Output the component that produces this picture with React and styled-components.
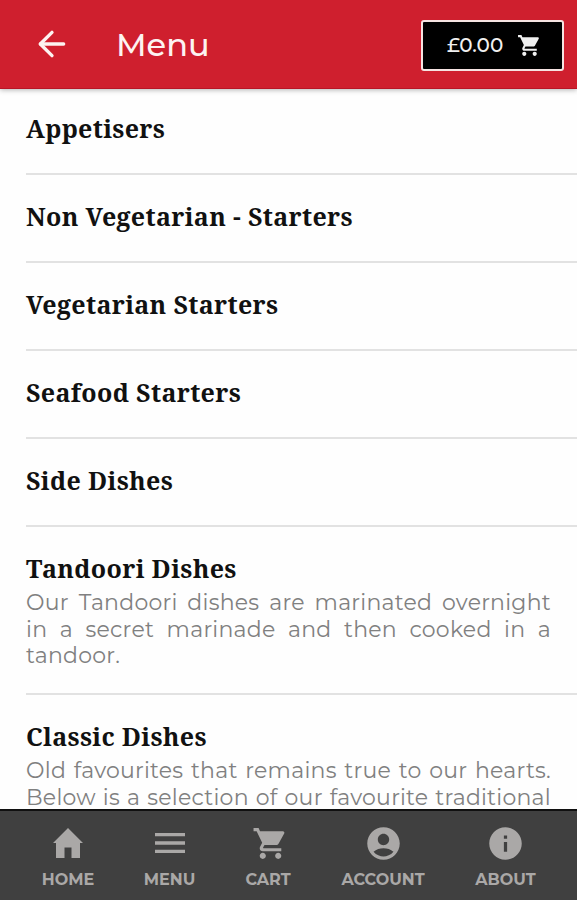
import React from "react";
import styled, { createGlobalStyle } from "styled-components";
import { ArrowLeft } from "lucide-react";
import { MdShoppingCart, MdMenu, MdAccountCircle, MdInfo } from "react-icons/md";

const GlobalStyle = createGlobalStyle`
  * {
    box-sizing: border-box;
  }
  body {
    margin: 0;
    background: #fefefe;
    font-family: Montserrat, Inter, sans-serif;
  }
`;

const Page = styled.div`
  display: flex;
  flex-direction: column;
  height: 900px;
  overflow: hidden;
`;

const Header = styled.header`
  display: flex;
  align-items: center;
  flex: none;
  height: 89px;
  padding: 2px 13px 0 32px;
  background: #cf1f2e;
  border-bottom: 1px solid #b81526;
  box-shadow: 0 1px 5px rgba(0, 0, 0, 0.3);
  color: #fdf3f1;
  z-index: 1;

  > svg {
    margin-top: -2px;
  }
`;

const Title = styled.h1`
  flex: 1;
  margin: 0 0 0 44px;
  font-size: 32px;
  font-weight: 500;
  line-height: 40px;
`;

const CartButton = styled.button`
  display: flex;
  align-items: center;
  justify-content: space-between;
  width: 143px;
  height: 51px;
  padding: 0 20px 0 24px;
  background: #000;
  border: 2px solid #f6e4e2;
  border-radius: 3px;
  color: #f0f0f0;
  font-family: inherit;
  font-size: 20px;
  font-weight: 500;
`;

const List = styled.main`
  flex: 1;
  min-height: 0;
  margin-top: -2px;
  overflow: hidden;
`;

const Category = styled.section`
  height: ${(props) => (props.$tall ? 168 : 88)}px;
  margin-left: 26px;
  padding: 24px 26px 0 0;
  border-bottom: 2px solid #e2e2e2;
`;

const Name = styled.h2`
  margin: 0 0 5px;
  color: #111;
  font-family: "Noto Serif", "DejaVu Serif", serif;
  font-size: 25px;
  font-weight: 700;
  line-height: 34px;
  letter-spacing: 0.34px;
  white-space: nowrap;
`;

const Line = styled.div`
  color: #808080;
  font-size: 22px;
  font-weight: 400;
  line-height: 26.7px;
  letter-spacing: 0.25px;
  text-align: justify;
  text-align-last: ${(props) => (props.$end ? "left" : "justify")};
  white-space: nowrap;
`;

const NavBar = styled.nav`
  display: flex;
  justify-content: space-between;
  flex: none;
  height: 91px;
  padding: 13px 41px 0 42px;
  background: #404040;
  border-top: 2px solid #101010;
`;

const NavItem = styled.a`
  display: flex;
  flex-direction: column;
  align-items: center;
  width: ${(props) => props.$width}px;
  color: #aaa8a7;
`;

const IconBox = styled.div`
  display: flex;
  align-items: center;
  justify-content: center;
  height: 38px;
  margin-left: ${(props) => props.$shift || 0}px;
`;

const Label = styled.span`
  margin-top: 8px;
  font-size: 16px;
  font-weight: 700;
  line-height: 20px;
  white-space: nowrap;
`;

function HomeIcon() {
  return (
    <svg width="30" height="30" viewBox="0 0 30 30" fill="currentColor">
      <path d="M15 0L30 15H27V30H18.5V19.5H11.5V30H3V15H0Z" />
    </svg>
  );
}

const categories = [
  { name: "Appetisers" },
  { name: "Non Vegetarian - Starters" },
  { name: "Vegetarian Starters" },
  { name: "Seafood Starters" },
  { name: "Side Dishes" },
  {
    name: "Tandoori Dishes",
    lines: [
      "Our Tandoori dishes are marinated overnight",
      "in a secret marinade and then cooked in a",
      "tandoor.",
    ],
  },
  {
    name: "Classic Dishes",
    lines: [
      "Old favourites that remains true to our hearts.",
      "Below is a selection of our favourite traditional",
    ],
  },
];

const navItems = [
  { label: "HOME", width: 52, icon: <HomeIcon /> },
  { label: "MENU", width: 51, icon: <MdMenu size={40} /> },
  { label: "CART", width: 46, shift: 4, icon: <MdShoppingCart size={37} /> },
  { label: "ACCOUNT", width: 84, icon: <MdAccountCircle size={39} /> },
  { label: "ABOUT", width: 61, icon: <MdInfo size={39} /> },
];

function App() {
  return (
    <Page>
      <GlobalStyle />
      <Header>
        <ArrowLeft size={40} strokeWidth={2} />
        <Title>Menu</Title>
        <CartButton>
          £0.00
          <MdShoppingCart size={25} />
        </CartButton>
      </Header>
      <List>
        {categories.map((category) => (
          <Category key={category.name} $tall={!!category.lines}>
            <Name>{category.name}</Name>
            {category.lines &&
              category.lines.map((line) => (
                <Line key={line} $end={line === "tandoor."}>
                  {line}
                </Line>
              ))}
          </Category>
        ))}
      </List>
      <NavBar>
        {navItems.map((item) => (
          <NavItem key={item.label} $width={item.width}>
            <IconBox $shift={item.shift}>{item.icon}</IconBox>
            <Label>{item.label}</Label>
          </NavItem>
        ))}
      </NavBar>
    </Page>
  );
}

export default App;
